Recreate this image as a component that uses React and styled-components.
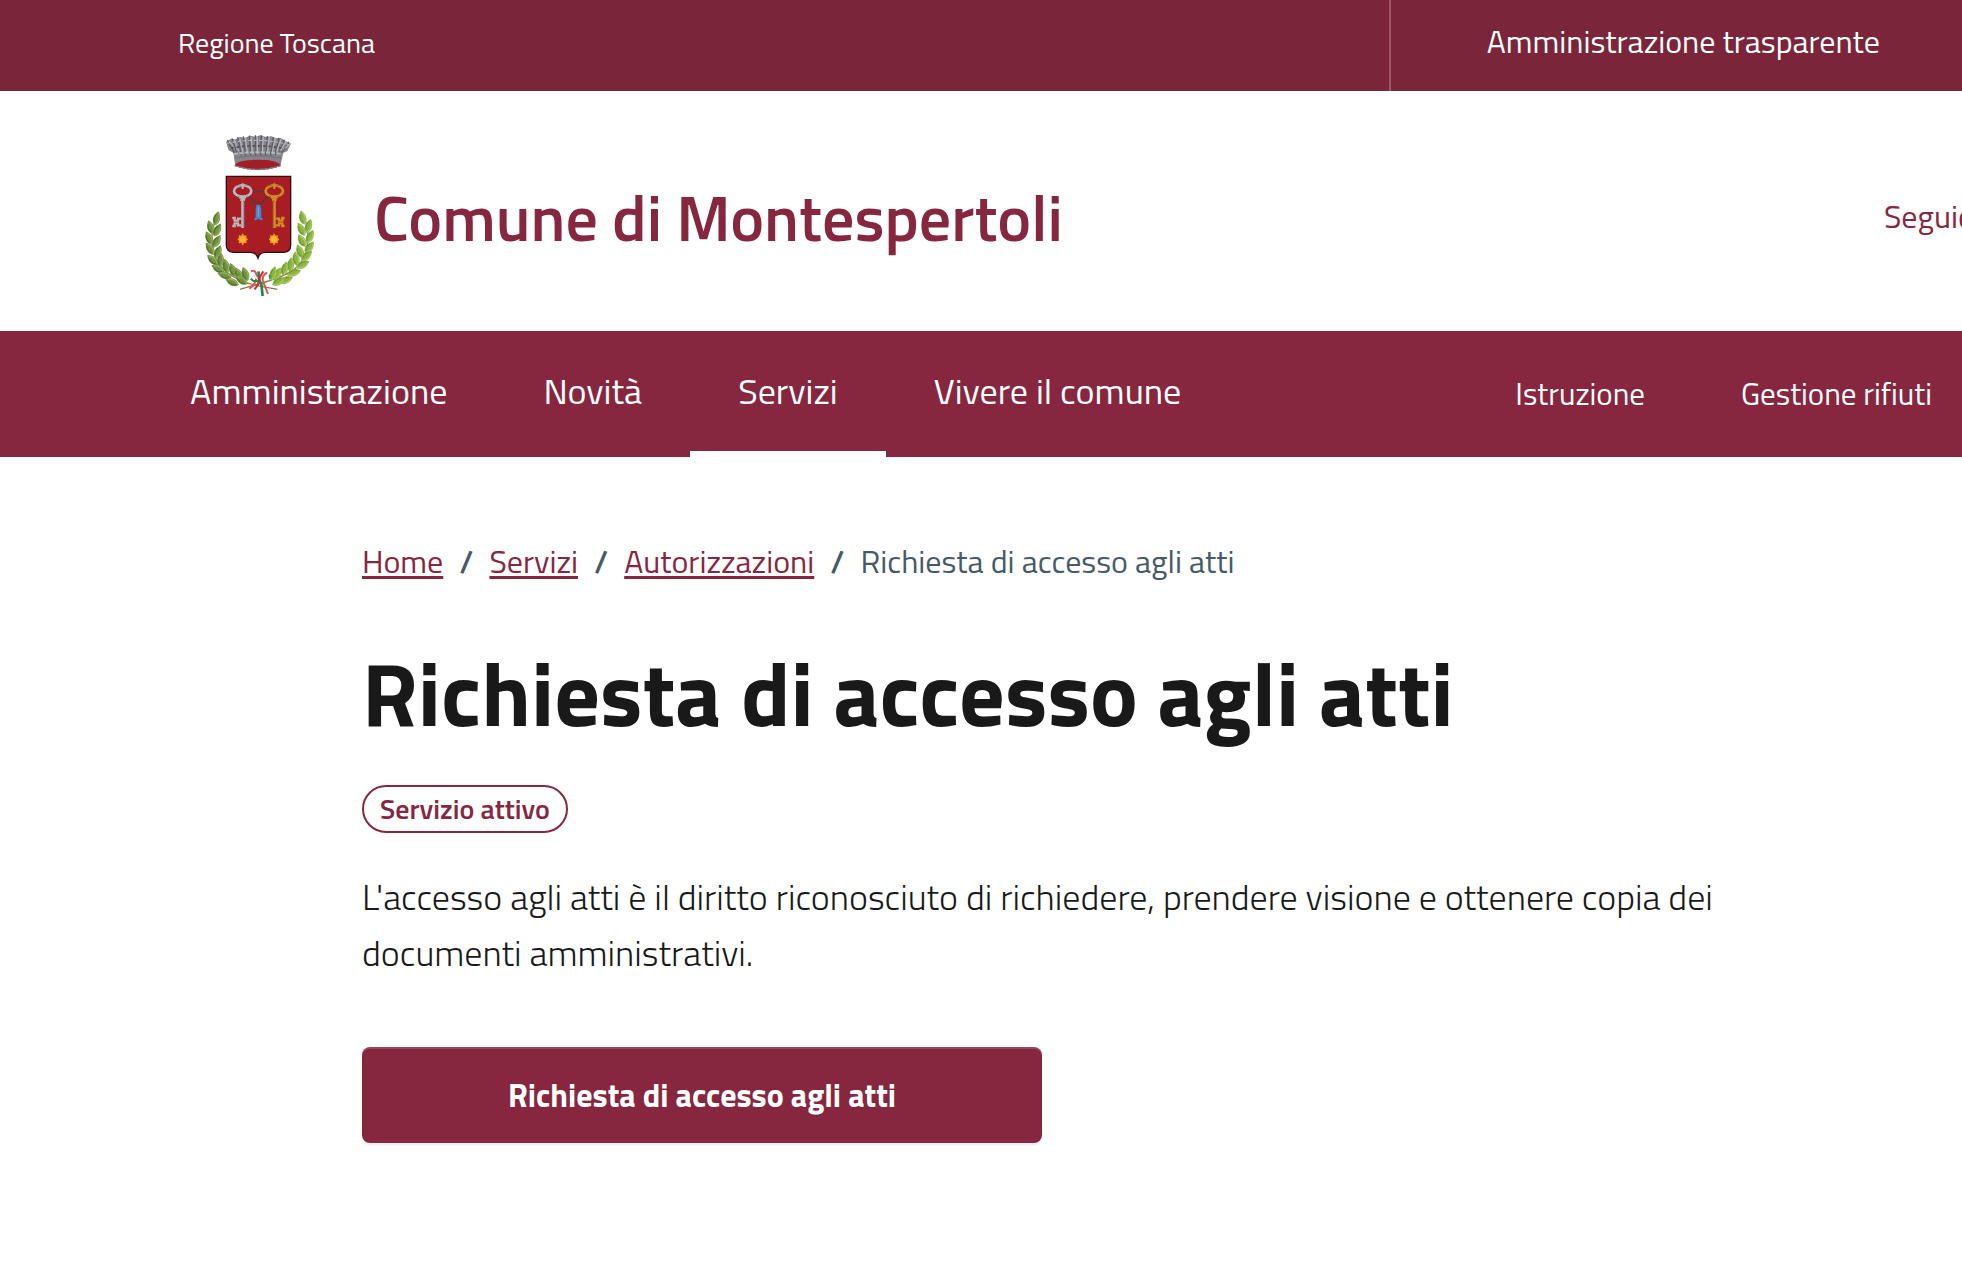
import React from "react";
import styled, { createGlobalStyle } from "styled-components";

const leftLeaves = [
  [80, 295, 14], [62, 322, -18], [82, 330, 28], [57, 354, -24], [80, 364, 30],
  [60, 386, -34], [84, 396, 22], [68, 420, -48], [92, 420, 4], [84, 446, -62],
  [108, 438, -12], [104, 466, -74], [128, 450, -20], [126, 486, -66], [146, 462, -28],
  [154, 480, -56], [166, 462, -20],
];

const rightLeaves = [
  [338, 293, -14], [356, 318, 18], [334, 328, -28], [360, 350, 26], [336, 362, -30],
  [358, 382, 36], [330, 394, -22], [350, 408, 46], [318, 416, -8], [338, 434, 62],
  [302, 434, 6], [312, 458, 72], [284, 446, 16], [288, 480, 68], [262, 462, 26],
  [266, 484, 60], [250, 460, 14],
];

const merlons = [
  [112, 60, 134, 100], [126, 55, 142, 104], [143, 51, 154, 106], [160, 49, 167, 108],
  [178, 47, 182, 110], [196, 46, 197, 110], [214, 46, 212, 110], [232, 48, 227, 109],
  [250, 51, 242, 107], [267, 54, 255, 105], [283, 59, 266, 102], [297, 66, 275, 98],
];

function Leaf({ x, y, angle, dark }) {
  return (
    <g transform={`translate(${x} ${y}) rotate(${angle})`}>
      <path
        d="M0 22 C-14 13 -14 -7 0 -22 C14 -7 14 13 0 22Z"
        fill={dark ? "#739440" : "#8bb443"}
      />
      <path d="M1 19 C8 8 8 -6 2 -15" stroke={dark ? "#9db569" : "#b0cd6e"} strokeWidth="3" fill="none" />
      <path d="M-3 14 C-8 6 -8 -4 -4 -11" stroke={dark ? "#547431" : "#719c36"} strokeWidth="4" fill="none" />
    </g>
  );
}

function Key({ x, flip, color, shade }) {
  return (
    <g transform={`translate(${x} 0) scale(${flip ? -1 : 1} 1)`} fill="none" stroke={color}>
      <ellipse cx="0" cy="213" rx="26" ry="17" strokeWidth="8" />
      <path d="M-26 201 Q-10 190 0 204 Q10 190 26 201 M-16 227 Q0 240 16 227" stroke={shade} strokeWidth="2" />
      <path d="M0 190 V207 M-10 233 H10 M-7 240 H7" strokeWidth="6" />
      <path d="M0 230 V324" strokeWidth="9" />
      <path d="M3 240 V322" stroke={shade} strokeWidth="2" />
      <path d="M-4 296 H-14 V302 H-24 V294 H-31 M-31 318 H-24 V310 H-14 V316 H-4" strokeWidth="7" />
    </g>
  );
}

function Sun({ x, y }) {
  return (
    <g transform={`translate(${x} ${y})`}>
      <circle r="12" fill="#f7a823" />
      <path
        d="M0 -17 V17 M-15 0 H15 M-11 -11 L11 11 M-11 11 L11 -11"
        stroke="#f39b1d"
        strokeWidth="5"
      />
      <circle r="8" fill="#fbb733" />
    </g>
  );
}

function Emblem() {
  return (
    <EmblemSvg viewBox="-36 -12 492 570" role="img" aria-label="Stemma del Comune di Montespertoli">
      {/* crown */}
      <path
        d="M108 66 L122 57 L136 58 L150 51 L166 53 L180 47 L196 50 L212 46 L228 51 L244 49 L258 55 L272 54 L286 62 L302 72 L292 94 L280 98 L271 138 Q203 162 136 138 L130 98 L116 91Z"
        fill="#85858b"
      />
      {merlons.map(([x1, y1, x2, y2]) => (
        <g key={x1}>
          <path d={`M${x1} ${y1} L${x2} ${y2}`} stroke="#5c5c63" strokeWidth="4" />
          <path d={`M${x1 + 6} ${y1 + 4} L${x2 + 5} ${y2 - 10}`} stroke="#b4b4b9" strokeWidth="4" />
        </g>
      ))}
      <path d="M112 70 Q204 50 298 74" stroke="#c6c6ca" strokeWidth="3" strokeDasharray="9 7" fill="none" />
      <path d="M124 84 Q204 70 286 86" stroke="#4c4c53" strokeWidth="5" strokeDasharray="7 9" fill="none" />
      <path d="M132 102 Q204 92 276 102" stroke="#b4b4b9" strokeWidth="6" strokeDasharray="12 4" fill="none" />
      <path d="M135 114 Q204 102 273 114" stroke="#77777e" strokeWidth="4" fill="none" />
      <path d="M134 136 Q144 119 203 119 Q262 119 272 136 Q203 158 134 136Z" fill="#a41d25" />
      <path d="M134 137 Q203 160 272 137" stroke="#77777e" strokeWidth="4" strokeDasharray="9 3" fill="none" />

      {/* shield */}
      <path
        d="M109 169 H302 V376 Q302 397 280 397 H226 Q208 398 204 414 Q199 398 182 397 H130 Q109 395 109 376Z"
        fill="#a81c23"
        stroke="#2c1013"
        strokeWidth="4"
      />
      <path d="M188 214 H222 M176 228 L205 257 L238 224" fill="none" stroke="#55393a" strokeWidth="5" />
      <Key x={158} color="#b9b8bd" shade="#808087" />
      <Key x={253} flip color="#d08e24" shade="#8d5716" />
      <path d="M199 254 H211 L214 270 V294 H218 V301 H210 L208 297 H202 L200 301 H193 V294 L197 292 V270Z" fill="#4385c6" />
      <path d="M205 262 V290" stroke="#6fa3d8" strokeWidth="4" />
      <Sun x={158} y={358} />
      <Sun x={252} y={358} />

      {/* wreath */}
      <path d="M80 290 C55 350 62 420 110 456 S175 492 262 508" stroke="#96793f" strokeWidth="4" fill="none" />
      <path d="M342 290 C366 350 352 420 312 448 S225 486 150 508" stroke="#96793f" strokeWidth="4" fill="none" />
      {leftLeaves.map(([x, y, angle]) => (
        <Leaf key={`${x}-${y}`} x={x} y={y} angle={angle} dark />
      ))}
      {rightLeaves.map(([x, y, angle]) => (
        <Leaf key={`${x}-${y}`} x={x} y={y} angle={angle} />
      ))}

      {/* ribbon */}
      <g fill="none" strokeWidth="6">
        <path d="M183 454 Q198 448 200 468 Q198 494 178 506" stroke="#e8505a" />
        <path d="M190 462 Q196 476 214 480 Q222 468 230 456" stroke="#ededed" />
        <path d="M206 454 Q204 476 214 492 L218 528" stroke="#188a4b" strokeWidth="8" />
        <path d="M220 454 Q204 476 204 494 L194 508" stroke="#d8252f" />
        <path d="M232 458 Q210 468 222 492 L234 522" stroke="#e8505a" />
        <path d="M182 476 Q192 488 206 482" stroke="#188a4b" />
        <path d="M238 464 L240 478" stroke="#188a4b" strokeWidth="4" />
      </g>
    </EmblemSvg>
  );
}

function App() {
  return (
    <>
      <GlobalStyle />
      <header>
        <TopBar>
          <RegionLink href="#">Regione Toscana</RegionLink>
          <TransparencyLink href="#">Amministrazione trasparente</TransparencyLink>
        </TopBar>
        <BrandBar>
          <Brand href="#">
            <Emblem />
            <BrandName>Comune di Montespertoli</BrandName>
          </Brand>
          <Social>Seguici su</Social>
        </BrandBar>
        <NavBar>
          <NavList>
            <NavLink href="#">Amministrazione</NavLink>
            <NavLink href="#">Novità</NavLink>
            <NavLink href="#" $active aria-current="page">Servizi</NavLink>
            <NavLink href="#">Vivere il comune</NavLink>
          </NavList>
          <TopicList>
            <TopicLink href="#">Istruzione</TopicLink>
            <TopicLink href="#">Gestione rifiuti</TopicLink>
          </TopicList>
        </NavBar>
      </header>
      <Main>
        <Breadcrumb aria-label="Percorso di navigazione">
          <Crumb href="#">Home</Crumb>
          <Separator>/</Separator>
          <Crumb href="#">Servizi</Crumb>
          <Separator>/</Separator>
          <Crumb href="#">Autorizzazioni</Crumb>
          <Separator>/</Separator>
          <span>Richiesta di accesso agli atti</span>
        </Breadcrumb>
        <Title>Richiesta di accesso agli atti</Title>
        <Badge>Servizio attivo</Badge>
        <Description>
          L'accesso agli atti è il diritto riconosciuto di richiedere, prendere visione e ottenere copia dei
          documenti amministrativi.
        </Description>
        <RequestButton type="button">Richiesta di accesso agli atti</RequestButton>
      </Main>
    </>
  );
}

export default App;

const GlobalStyle = createGlobalStyle`
  * {
    box-sizing: border-box;
  }
  body {
    margin: 0;
    background: #fff;
    color: #191919;
    font-family: "Titillium Web", Roboto, sans-serif;
    overflow-x: hidden;
  }
  a {
    color: inherit;
    text-decoration: none;
  }
`;

const TopBar = styled.div`
  display: flex;
  align-items: stretch;
  justify-content: space-between;
  height: 91px;
  padding-left: 178px;
  background: #7a2539;
  color: #fff;
  line-height: 40px;
`;

const RegionLink = styled.a`
  padding-top: 23px;
  font-size: 28px;
`;

const TransparencyLink = styled.a`
  padding: 21px 82px 0 96px;
  border-left: 2px solid #9b586a;
  font-size: 32px;
`;

const BrandBar = styled.div`
  display: flex;
  align-items: center;
  justify-content: space-between;
  height: 240px;
  padding-left: 178px;
  color: #87273f;
  overflow: hidden;
`;

const Brand = styled.a`
  display: flex;
  align-items: center;
  gap: 32px;
`;

const EmblemSvg = styled.svg`
  width: 164px;
  height: 190px;
`;

const BrandName = styled.span`
  padding-top: 12px;
  font-size: 64px;
  font-weight: 600;
  line-height: 72px;
`;

const Social = styled.span`
  flex: 0 0 78px;
  min-width: 0;
  padding-top: 10px;
  font-size: 32px;
  line-height: 40px;
  white-space: nowrap;
`;

const NavBar = styled.nav`
  display: flex;
  justify-content: space-between;
  height: 126px;
  padding: 0 30px 0 142px;
  background: #87273f;
  color: #fff;
`;

const NavList = styled.div`
  display: flex;
`;

const NavLink = styled.a`
  padding: 36px 48px 0;
  border-bottom: 6px solid ${(props) => (props.$active ? "#fff" : "transparent")};
  font-size: 36px;
  line-height: 48px;
`;

const TopicList = styled.div`
  display: flex;
  gap: 96px;
`;

const TopicLink = styled.a`
  padding-top: 39px;
  font-size: 31px;
  line-height: 48px;
`;

const Main = styled.main`
  padding: 80px 200px 80px 362px;
`;

const Breadcrumb = styled.nav`
  display: flex;
  gap: 16px;
  color: #455b68;
  font-size: 32px;
  line-height: 48px;
`;

const Crumb = styled.a`
  color: #87273f;
  text-decoration: underline;
  text-decoration-thickness: 3px;
  text-underline-offset: 3px;
`;

const Separator = styled.span`
  font-weight: 600;
`;

const Title = styled.h1`
  margin: 52px 0 36px;
  font-size: 90px;
  font-weight: 700;
  line-height: 112px;
`;

const Badge = styled.div`
  width: fit-content;
  padding: 0 16px;
  border: 2px solid #87273f;
  border-radius: 24px;
  color: #87273f;
  font-size: 28px;
  font-weight: 600;
  line-height: 44px;
`;

const Description = styled.p`
  margin: 36px 0 66px;
  font-size: 36px;
  font-weight: 300;
  line-height: 56px;
`;

const RequestButton = styled.button`
  width: 680px;
  max-width: 100%;
  height: 96px;
  border: none;
  border-radius: 8px;
  background: #87273f;
  box-shadow: inset 0 2px 0 rgba(255, 255, 255, 0.15), 0 2px 2px rgba(0, 0, 0, 0.08);
  color: #fff;
  font-family: inherit;
  font-size: 32px;
  font-weight: 700;
  cursor: pointer;
`;
